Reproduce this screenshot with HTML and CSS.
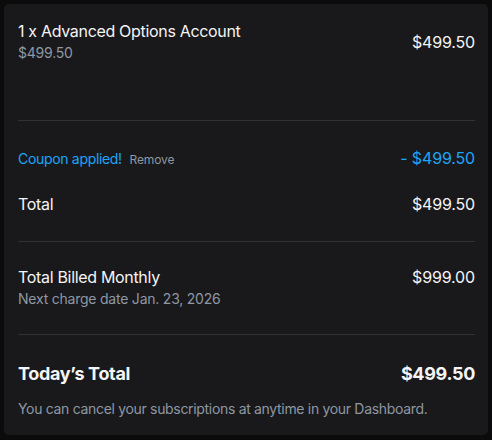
FILE: index.html
```html
<!DOCTYPE html>
<html>
<head>
<meta charset="utf-8">
<link rel="stylesheet" href="styles.css">
</head>
<body>
<div class="card">
  <div class="item">
    <div class="item-info">
      <div class="title">1 x Advanced Options Account</div>
      <div class="sub">$499.50</div>
    </div>
    <div class="amount">$499.50</div>
  </div>
  <hr class="divider">
  <div class="row coupon-row">
    <div class="coupon">Coupon applied! <span class="remove">Remove</span></div>
    <div class="amount blue">- $499.50</div>
  </div>
  <div class="row total-row">
    <div class="title">Total</div>
    <div class="amount">$499.50</div>
  </div>
  <hr class="divider">
  <div class="billed">
    <div class="billed-info">
      <div class="title">Total Billed Monthly</div>
      <div class="sub">Next charge date Jan. 23, 2026</div>
    </div>
    <div class="amount">$999.00</div>
  </div>
  <hr class="divider">
  <div class="row today-row">
    <div class="big">Today’s Total</div>
    <div class="big">$499.50</div>
  </div>
  <div class="note">You can cancel your subscriptions at anytime in your Dashboard.</div>
</div>
</body>
</html>
```
FILE: styles.css
```css
html, body {
  margin: 0;
  padding: 0;
  background: #0b0b0c;
}
body {
  padding: 4px;
  font-family: Inter, "Liberation Sans", sans-serif;
  color: #f4f4f5;
  letter-spacing: -0.02em;
}
.card {
  width: 484px;
  box-sizing: border-box;
  background: #19191b;
  border-radius: 5px;
  padding: 17px 13px 16px 14px;
}
.item {
  display: flex;
  justify-content: space-between;
  align-items: center;
  margin-bottom: 57px;
}
.title {
  font-size: 16px;
  line-height: 20px;
}
.sub {
  font-size: 14px;
  line-height: 20px;
  color: #8e97a4;
  margin-top: 2px;
  letter-spacing: -0.016em;
}
.amount {
  font-size: 16px;
  line-height: 20px;
  letter-spacing: -0.01em;
}
.blue { color: #1ba6f9; }
.divider {
  border: 0;
  height: 1px;
  background: #313134;
  margin: 0;
}
.row {
  display: flex;
  justify-content: space-between;
  align-items: center;
  height: 24px;
}
.coupon-row { margin-top: 25px; }
.total-row { margin-top: 22px; margin-bottom: 25px; }
.coupon {
  font-size: 14px;
  color: #1ba6f9;
}
.remove {
  font-size: 12px;
  color: #8e97a4;
  margin-left: 4px;
  letter-spacing: -0.01em;
}
.billed {
  display: flex;
  justify-content: space-between;
  align-items: flex-start;
  margin-top: 25px;
  margin-bottom: 25px;
}
.today-row { margin-top: 26px; }
.big {
  font-size: 18px;
  font-weight: 700;
}
.note {
  margin-top: 14px;
  font-size: 14px;
  line-height: 20px;
  color: #8e97a4;
}
```
